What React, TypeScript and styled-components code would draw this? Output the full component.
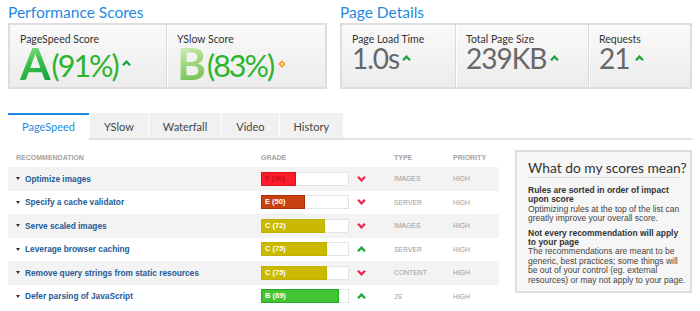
import React from 'react';
import styled, { createGlobalStyle } from 'styled-components';

const GlobalStyle = createGlobalStyle`
  html, body { margin: 0; padding: 0; background: #fff; }
  body { font-family: Lato, "Liberation Sans", sans-serif; width: 700px; height: 311px; overflow: hidden; }
  * { box-sizing: border-box; }
`;

const Page = styled.div`
  width: 700px;
  padding: 0 8px;
`;

const TopRow = styled.div`
  display: flex;
  gap: 13px;
`;

const Section = styled.section<{ $w: number }>`
  width: ${(p) => p.$w}px;
`;

const SectionTitle = styled.h2`
  margin: 0 0 1px;
  padding-top: 2px;
  font-family: Lato, sans-serif;
  font-weight: 400;
  font-size: 15.5px;
  line-height: 20px;
  color: #1f8ae0;
`;

const ScoreBox = styled.div`
  display: flex;
  height: 66px;
  border: 2px solid #dedede;
  background: linear-gradient(#fafafa, #ececec);
`;

const Cell = styled.div<{ $w?: number }>`
  flex: ${(p) => (p.$w ? `0 0 ${p.$w}px` : '1 1 0')};
  padding: 8px 0 0 10px;
  border-right: 1px solid #d9d9d9;
  box-shadow: inset 1px 0 0 #fff;
  &:first-child { box-shadow: none; }
  &:last-child { border-right: 0; }
`;

const CellLabel = styled.div`
  font-family: Lato, sans-serif;
  font-size: 10.5px;
  line-height: 13px;
  color: #333;
`;

const ValueLine = styled.div<{ $lh: number }>`
  height: ${(p) => p.$lh}px;
  line-height: ${(p) => p.$lh}px;
  white-space: nowrap;
`;

const GradeLetter = styled.span<{ $grad: string }>`
  display: inline-block;
  line-height: 34px;
  font-family: Lato, sans-serif;
  font-weight: 700;
  font-size: 44px;
  background: ${(p) => p.$grad};
  -webkit-background-clip: text;
  background-clip: text;
  color: transparent;
`;

const Percent = styled.span`
  display: inline-block;
  line-height: 28px;
  font-family: Lato, sans-serif;
  font-size: 30.5px;
  letter-spacing: -2px;
  color: #2cb52c;
  vertical-align: 3px;
  margin-left: 1px;
`;

const BigNumber = styled.span`
  display: inline-block;
  line-height: 24px;
  font-family: Lato, sans-serif;
  font-size: 28px;
  letter-spacing: -1px;
  color: #686868;
`;

const Mark = styled.span<{ $ml: number; $va: number }>`
  display: inline-block;
  margin-left: ${(p) => p.$ml}px;
  vertical-align: ${(p) => p.$va}px;
  line-height: 0;
`;

const Up = ({ color = '#1aa53a' }: { color?: string }) => (
  <svg width="9" height="6" viewBox="0 0 9 6">
    <polyline points="1,5.2 4.5,1.6 8,5.2" fill="none" stroke={color} strokeWidth="2.3" />
  </svg>
);

const Down = ({ color = '#ee2b4f' }: { color?: string }) => (
  <svg width="9" height="6" viewBox="0 0 9 6">
    <polyline points="1,0.8 4.5,4.4 8,0.8" fill="none" stroke={color} strokeWidth="2.3" />
  </svg>
);

const Diamond = () => (
  <svg width="8" height="8" viewBox="0 0 8 8">
    <polygon points="4,0.3 7.7,4 4,7.7 0.3,4" fill="#f59a1b" />
    <circle cx="4" cy="4" r="1.3" fill="#fde2b0" />
  </svg>
);

const TabBar = styled.div`
  display: flex;
  gap: 1px;
  margin-top: 24px;
  border-bottom: 2px solid #e3e3e3;
`;

const Tab = styled.div<{ $active?: boolean }>`
  height: 27px;
  margin-bottom: -2px;
  padding: 0 14px;
  display: flex;
  align-items: center;
  font-family: Lato, sans-serif;
  font-size: 11px;
  background: ${(p) => (p.$active ? '#fff' : '#f1f1f1')};
  color: ${(p) => (p.$active ? '#1f8ae0' : '#444')};
  border-top: 2px solid ${(p) => (p.$active ? '#1f8ae0' : '#f1f1f1')};
  border-bottom: 2px solid ${(p) => (p.$active ? '#fff' : '#e3e3e3')};
`;

const Main = styled.div`
  display: flex;
  align-items: flex-start;
`;

const Table = styled.div`
  width: 492px;
`;

const Row = styled.div<{ $shade?: boolean }>`
  display: grid;
  grid-template-columns: 253px 133px 59px 1fr;
  align-items: center;
  height: 23.5px;
  background: ${(p) => (p.$shade ? '#f3f3f3' : '#fff')};
`;

const HeaderRow = styled(Row)`
  height: 27px;
  align-items: end;
  padding-bottom: 5px;
`;

const HeadCell = styled.div<{ $pl?: number }>`
  padding-left: ${(p) => p.$pl || 0}px;
  font-family: "Liberation Sans", Arial, sans-serif;
  font-weight: 700;
  font-size: 7px;
  line-height: 9px;
  color: #a3a3a3;
`;

const NameCell = styled.div`
  display: flex;
  align-items: center;
  gap: 5px;
  padding-left: 8px;
`;

const Caret = styled.span`
  width: 0;
  height: 0;
  border-left: 2.5px solid transparent;
  border-right: 2.5px solid transparent;
  border-top: 3px solid #333;
`;

const RuleName = styled.span`
  font-family: "Liberation Sans", Arial, sans-serif;
  font-weight: 700;
  font-size: 8.3px;
  color: #1d5a98;
  white-space: nowrap;
`;

const GradeCell = styled.div`
  display: flex;
  align-items: center;
  gap: 8px;
`;

const Bar = styled.div`
  width: 88px;
  height: 14px;
  background: #fff;
  box-shadow: inset 0 0 0 1px #e4e4e4;
  display: flex;
`;

const Fill = styled.div<{ $bg: string; $bd: string; $fg: string }>`
  height: 14px;
  background: ${(p) => p.$bg};
  border: 1px solid ${(p) => p.$bd};
  color: ${(p) => p.$fg};
  padding-left: 3px;
  font-family: "Liberation Sans", Arial, sans-serif;
  font-weight: 700;
  font-size: 7.5px;
  line-height: 12px;
  white-space: nowrap;
`;

const PlainCell = styled.div`
  font-family: "Liberation Sans", Arial, sans-serif;
  font-size: 6.8px;
  color: #9a9a9a;
`;

const Panel = styled.aside`
  width: 177px;
  margin: 10px 0 0 16px;
  border: 2px solid #dedede;
  background: #f6f6f6;
  padding: 8px 9px 6px 11px;
`;

const PanelTitle = styled.h3`
  margin: 0 0 8px;
  padding-bottom: 1px;
  font-family: Lato, sans-serif;
  font-weight: 400;
  font-size: 13.8px;
  line-height: 16px;
  color: #333;
  border-bottom: 1px solid #dadada;
  white-space: nowrap;
`;

const Para = styled.p`
  margin: 0 0 5px;
  font-family: "Liberation Sans", Arial, sans-serif;
  font-size: 8.5px;
  line-height: 9.4px;
  color: #444;
  white-space: nowrap;
  &:last-child { margin-bottom: 0; }
  strong { color: #333; }
`;

const fills: Record<string, { bg: string; bd: string; fg: string }> = {
  F: { bg: '#ff1c2a', bd: '#e0101c', fg: '#c0101a' },
  E: { bg: '#c8410f', bd: '#a8300a', fg: '#fff' },
  C: { bg: '#c9b900', bd: '#c2b200', fg: '#fff' },
  B: { bg: '#43c434', bd: '#25a825', fg: '#fff' },
};

const rules = [
  { name: 'Optimize images', g: 'F', score: 30, w: 35, up: false, type: 'IMAGES' },
  { name: 'Specify a cache validator', g: 'E', score: 50, w: 44, up: false, type: 'SERVER' },
  { name: 'Serve scaled images', g: 'C', score: 72, w: 64, up: false, type: 'IMAGES' },
  { name: 'Leverage browser caching', g: 'C', score: 75, w: 66, up: true, type: 'SERVER' },
  { name: 'Remove query strings from static resources', g: 'C', score: 75, w: 66, up: false, type: 'CONTENT' },
  { name: 'Defer parsing of JavaScript', g: 'B', score: 89, w: 78, up: true, type: 'JS' },
];

export default function App() {
  return (
    <>
      <GlobalStyle />
      <Page>
        <TopRow>
          <Section $w={319}>
            <SectionTitle>Performance Scores</SectionTitle>
            <ScoreBox>
              <Cell $w={157}>
                <CellLabel>PageSpeed Score</CellLabel>
                <ValueLine $lh={34}>
                  <GradeLetter $grad="linear-gradient(160deg, #9be39b 0%, #3cc24c 45%, #17a23a 100%)">A</GradeLetter>
                  <Percent>(91%)</Percent>
                  <Mark $ml={4} $va={14}><Up /></Mark>
                </ValueLine>
              </Cell>
              <Cell>
                <CellLabel>YSlow Score</CellLabel>
                <ValueLine $lh={34}>
                  <GradeLetter $grad="linear-gradient(160deg, #d8f0c0 0%, #a3d880 45%, #6cbf4a 100%)">B</GradeLetter>
                  <Percent>(83%)</Percent>
                  <Mark $ml={5} $va={12}><Diamond /></Mark>
                </ValueLine>
              </Cell>
            </ScoreBox>
          </Section>
          <Section $w={352}>
            <SectionTitle>Page Details</SectionTitle>
            <ScoreBox>
              <Cell $w={114}>
                <CellLabel>Page Load Time</CellLabel>
                <ValueLine $lh={30}>
                  <BigNumber>1.0s</BigNumber>
                  <Mark $ml={3} $va={8}><Up /></Mark>
                </ValueLine>
              </Cell>
              <Cell $w={133}>
                <CellLabel>Total Page Size</CellLabel>
                <ValueLine $lh={30}>
                  <BigNumber>239KB</BigNumber>
                  <Mark $ml={4} $va={8}><Up /></Mark>
                </ValueLine>
              </Cell>
              <Cell>
                <CellLabel>Requests</CellLabel>
                <ValueLine $lh={30}>
                  <BigNumber>21</BigNumber>
                  <Mark $ml={6} $va={8}><Up /></Mark>
                </ValueLine>
              </Cell>
            </ScoreBox>
          </Section>
        </TopRow>

        <TabBar>
          <Tab $active>PageSpeed</Tab>
          <Tab>YSlow</Tab>
          <Tab>Waterfall</Tab>
          <Tab>Video</Tab>
          <Tab>History</Tab>
        </TabBar>

        <Main>
          <Table>
            <HeaderRow>
              <HeadCell $pl={8}>RECOMMENDATION</HeadCell>
              <HeadCell>GRADE</HeadCell>
              <HeadCell>TYPE</HeadCell>
              <HeadCell>PRIORITY</HeadCell>
            </HeaderRow>
            {rules.map((r, i) => {
              const f = fills[r.g];
              return (
                <Row key={r.name} $shade={i % 2 === 0}>
                  <NameCell>
                    <Caret />
                    <RuleName>{r.name}</RuleName>
                  </NameCell>
                  <GradeCell>
                    <Bar>
                      <Fill $bg={f.bg} $bd={f.bd} $fg={f.fg} style={{ width: r.w }}>
                        {r.g} ({r.score})
                      </Fill>
                    </Bar>
                    {r.up ? <Up /> : <Down />}
                  </GradeCell>
                  <PlainCell>{r.type}</PlainCell>
                  <PlainCell>HIGH</PlainCell>
                </Row>
              );
            })}
          </Table>
          <Panel>
            <PanelTitle>What do my scores mean?</PanelTitle>
            <Para>
              <strong>Rules are sorted in order of impact<br />upon score</strong>
              <br />
              Optimizing rules at the top of the list can<br />
              greatly improve your overall score.
            </Para>
            <Para>
              <strong>Not every recommendation will apply<br />to your page</strong>
              <br />
              The recommendations are meant to be<br />
              generic, best practices; some things will<br />
              be out of your control (eg. external<br />
              resources) or may not apply to your page.
            </Para>
          </Panel>
        </Main>
      </Page>
    </>
  );
}
